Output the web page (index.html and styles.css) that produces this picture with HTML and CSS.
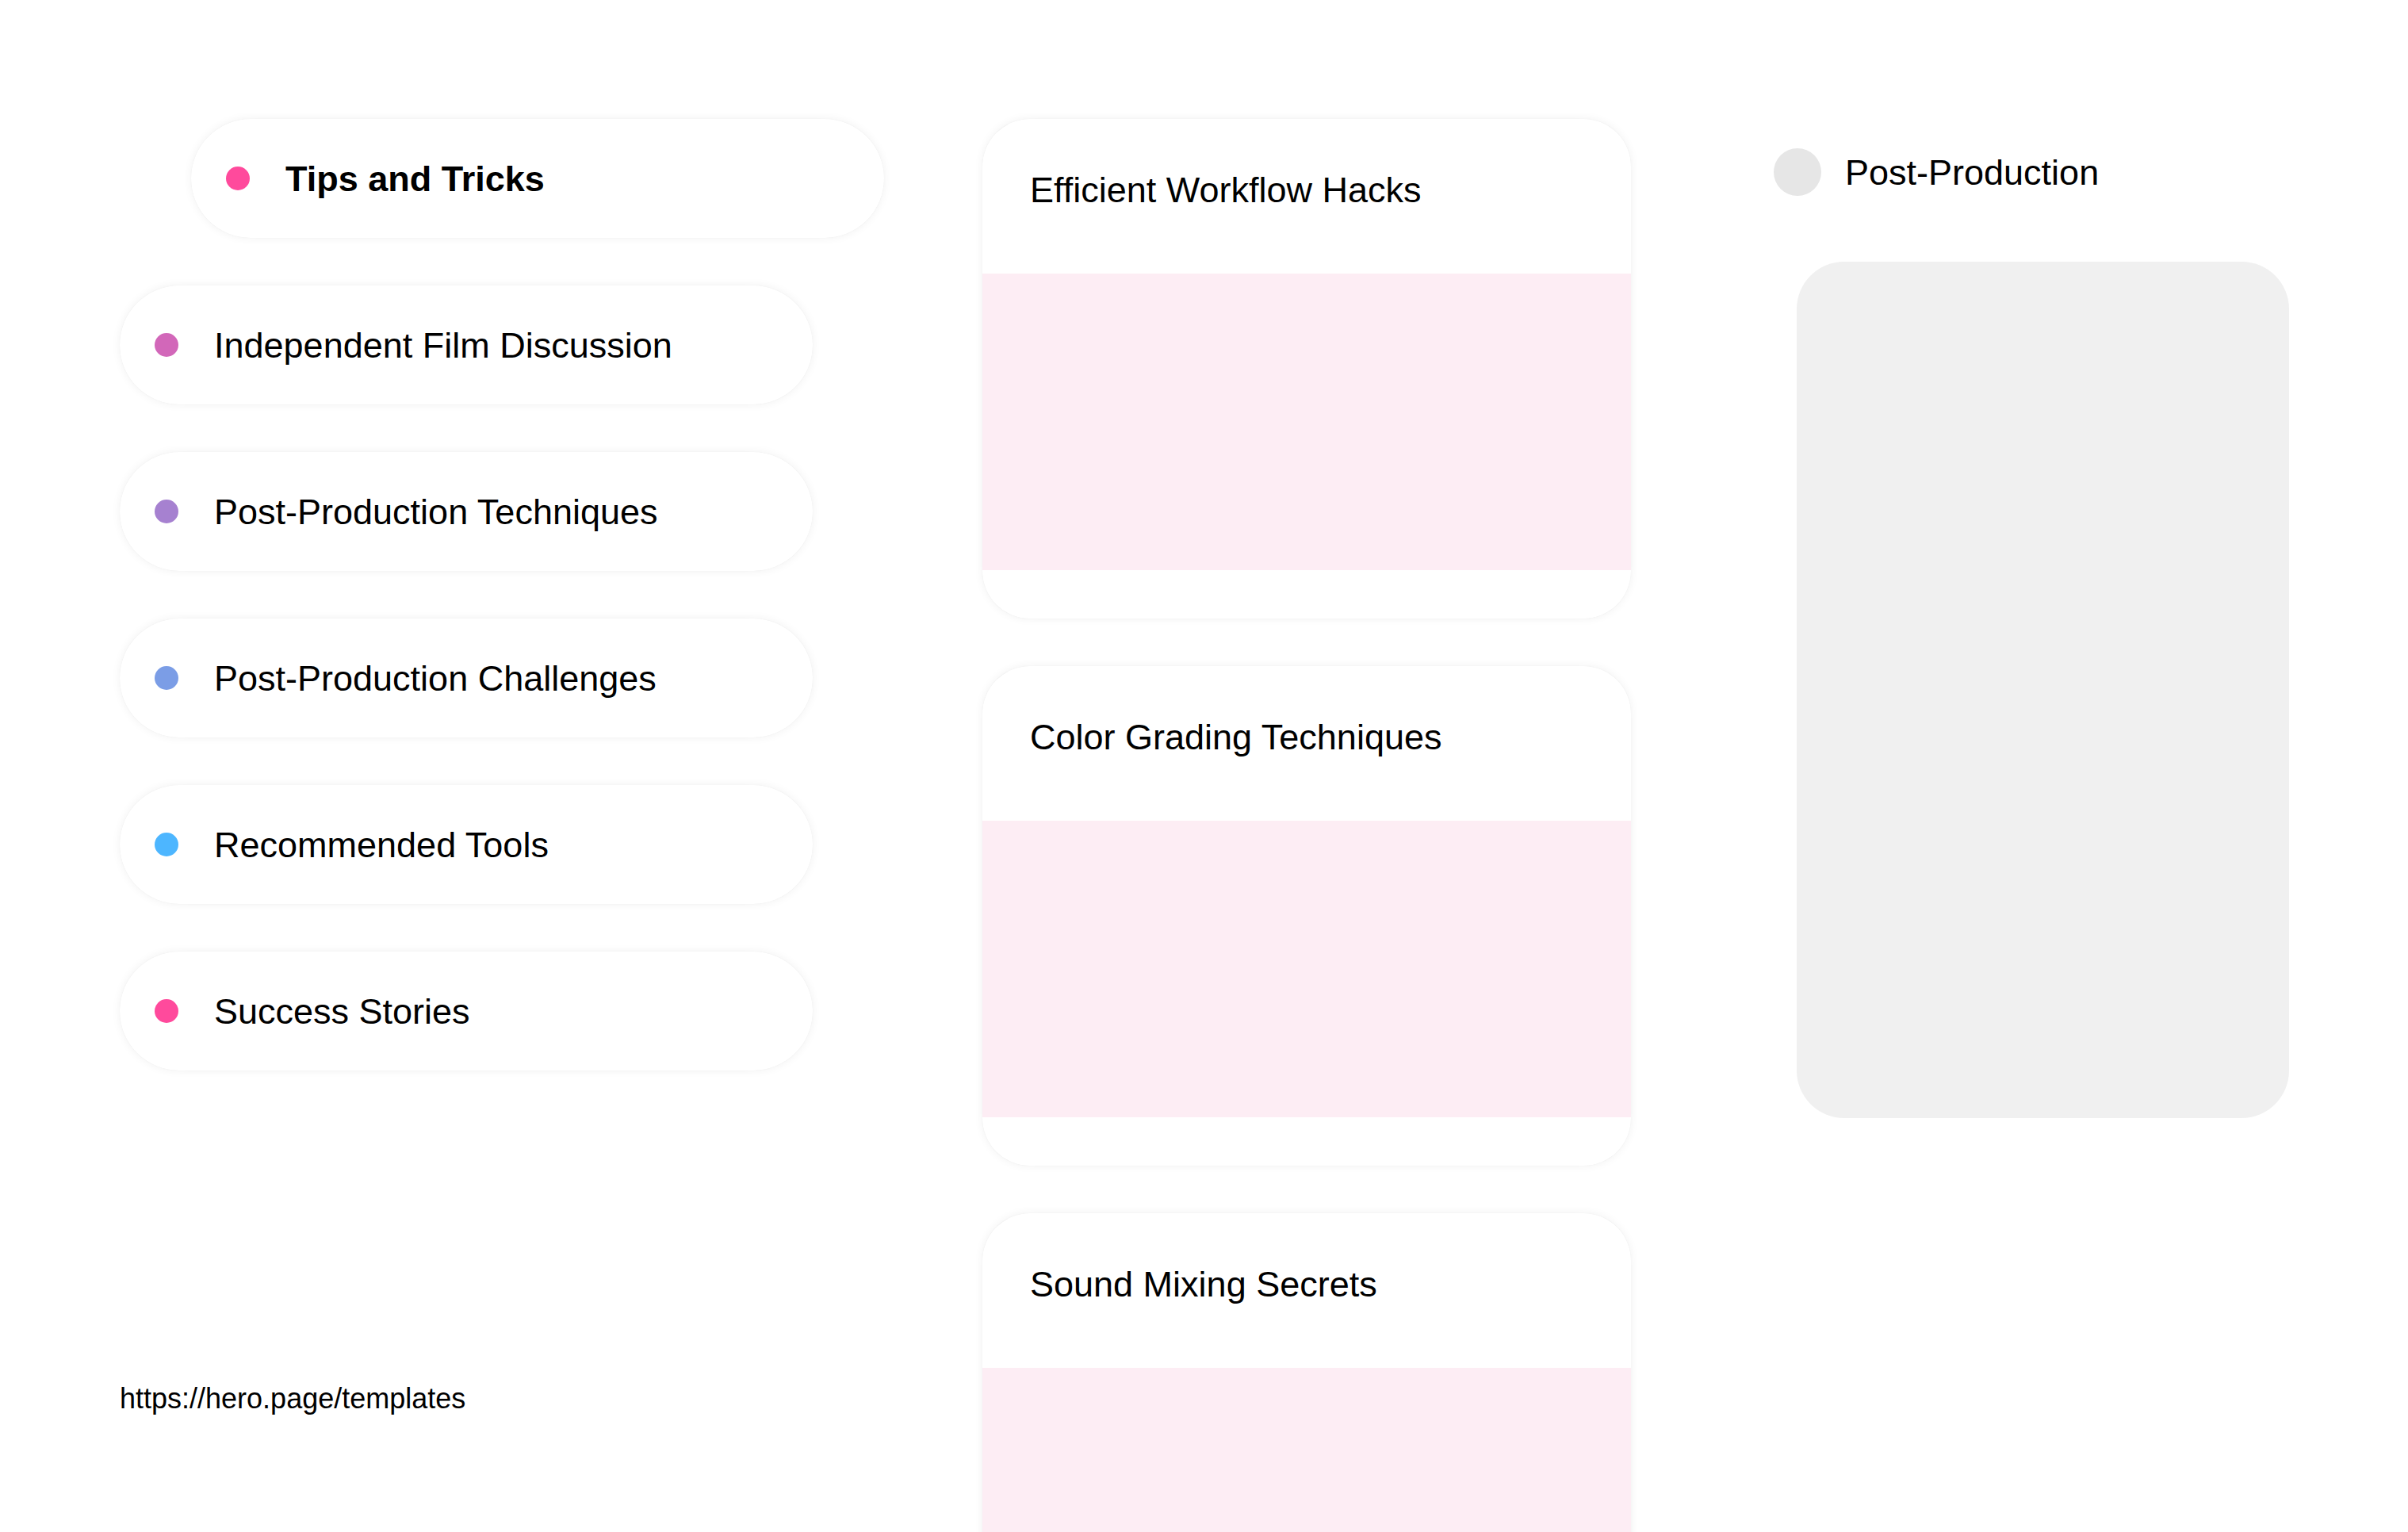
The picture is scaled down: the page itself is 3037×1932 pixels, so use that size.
FILE: index.html
```html
<!DOCTYPE html>
<html lang="en">
<head>
<meta charset="utf-8">
<title>Post-Production</title>
<link rel="stylesheet" href="styles.css">
</head>
<body>
<div class="page">
  <aside class="topics">
    <ul class="topic-list">
      <li class="topic active"><span class="dot dot-pink"></span><span class="topic-label">Tips and Tricks</span></li>
      <li class="topic"><span class="dot dot-orchid"></span><span class="topic-label">Independent Film Discussion</span></li>
      <li class="topic"><span class="dot dot-purple"></span><span class="topic-label">Post-Production Techniques</span></li>
      <li class="topic"><span class="dot dot-blue"></span><span class="topic-label">Post-Production Challenges</span></li>
      <li class="topic"><span class="dot dot-sky"></span><span class="topic-label">Recommended Tools</span></li>
      <li class="topic"><span class="dot dot-pink"></span><span class="topic-label">Success Stories</span></li>
    </ul>
    <a class="source-link" href="#">https://hero.page/templates</a>
  </aside>

  <main class="posts">
    <article class="card">
      <h2 class="card-title">Efficient Workflow Hacks</h2>
      <div class="card-media"></div>
      <div class="card-foot"></div>
    </article>
    <article class="card">
      <h2 class="card-title">Color Grading Techniques</h2>
      <div class="card-media"></div>
      <div class="card-foot"></div>
    </article>
    <article class="card">
      <h2 class="card-title">Sound Mixing Secrets</h2>
      <div class="card-media"></div>
      <div class="card-foot"></div>
    </article>
  </main>

  <section class="profile">
    <div class="profile-head">
      <span class="avatar"></span>
      <span class="profile-name">Post-Production</span>
    </div>
    <div class="profile-panel"></div>
  </section>
</div>
</body>
</html>
```

FILE: styles.css
```css
* {
  box-sizing: border-box;
}

html, body {
  margin: 0;
  padding: 0;
  background: #ffffff;
}

body {
  font-family: "Liberation Sans", Arial, sans-serif;
  color: #000000;
  overflow: hidden;
}

.page {
  display: flex;
  align-items: flex-start;
  padding: 150px 0 0 151px;
}

/* Left column */
.topics {
  width: 874px;
  margin-right: 214px;
  flex-shrink: 0;
  display: flex;
  flex-direction: column;
}

.topic-list {
  list-style: none;
  margin: 0;
  padding: 0;
  display: flex;
  flex-direction: column;
  gap: 60px;
}

.topic {
  height: 150px;
  border-radius: 75px;
  background: #ffffff;
  box-shadow: 0 0 12px rgba(0, 0, 0, 0.06), 0 0 1px rgba(0, 0, 0, 0.08);
  display: flex;
  align-items: center;
  gap: 45px;
  padding: 0 44px;
  font-size: 45px;
}

.topic.active {
  transform: translateX(90px);
  font-weight: bold;
}

.dot {
  width: 30px;
  height: 30px;
  border-radius: 50%;
  flex-shrink: 0;
}

.dot-pink { background: #ff4a9c; }
.dot-orchid { background: #d267b9; }
.dot-purple { background: #a681d0; }
.dot-blue { background: #7b9de6; }
.dot-sky { background: #4db6ff; }

.topic-label {
  line-height: 51px;
}

.source-link {
  margin-top: 393px;
  font-size: 36px;
  line-height: 1.15;
  color: #000000;
  text-decoration: none;
}

/* Middle column */
.posts {
  width: 818px;
  margin-right: 180px;
  flex-shrink: 0;
  display: flex;
  flex-direction: column;
  gap: 60px;
}

.card {
  background: #ffffff;
  border-radius: 60px;
  overflow: hidden;
  box-shadow: 0 0 12px rgba(0, 0, 0, 0.06), 0 0 1px rgba(0, 0, 0, 0.08);
}

.card-title {
  margin: 0;
  padding: 64px 60px 80px 60px;
  font-size: 45px;
  font-weight: normal;
  line-height: 51px;
}

.card-media {
  height: 374px;
  background: #fdedf4;
}

.card-foot {
  height: 61px;
}

/* Right column */
.profile {
  width: 650px;
  flex-shrink: 0;
  padding-top: 37px;
}

.profile-head {
  display: flex;
  align-items: center;
  gap: 30px;
  height: 60px;
}

.avatar {
  width: 60px;
  height: 60px;
  border-radius: 50%;
  background: #e6e6e6;
  flex-shrink: 0;
}

.profile-name {
  font-size: 45px;
  line-height: 51px;
}

.profile-panel {
  margin: 83px 0 0 29px;
  width: 621px;
  height: 1080px;
  border-radius: 60px;
  background: #f0f0f0;
}
```
